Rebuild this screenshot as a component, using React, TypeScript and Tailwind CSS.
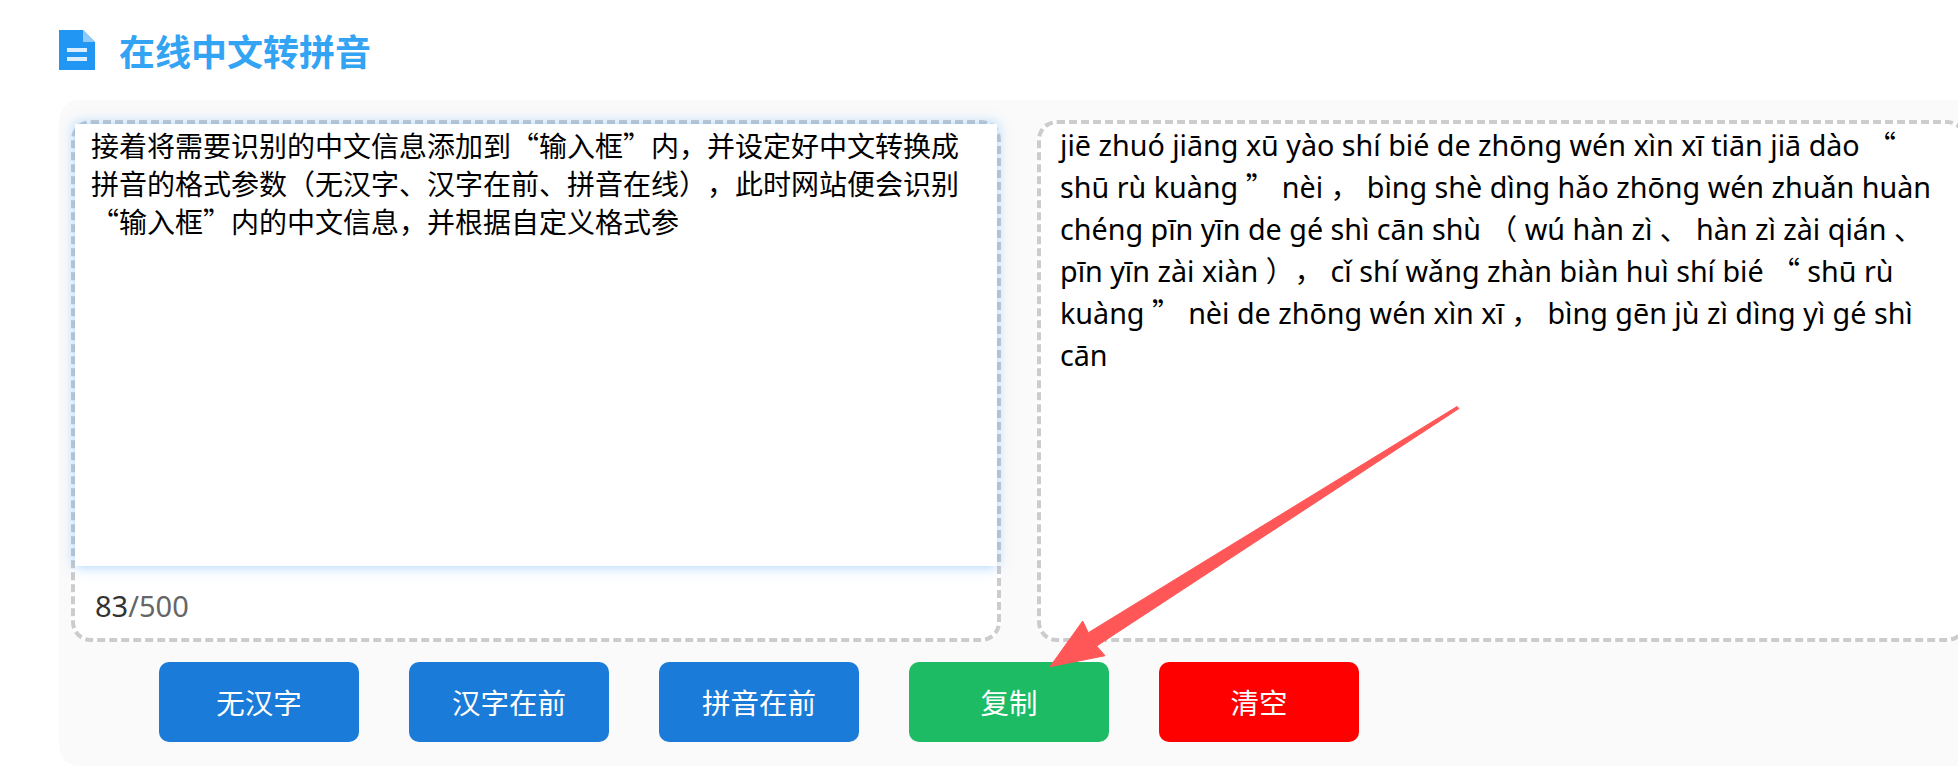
const buttons = [
  { label: "无汉字", color: "bg-[#1a7bd9]" },
  { label: "汉字在前", color: "bg-[#1a7bd9]" },
  { label: "拼音在前", color: "bg-[#1a7bd9]" },
  { label: "复制", color: "bg-[#1dbb63]" },
  { label: "清空", color: "bg-[#ff0000]" },
];

const inputText =
  "接着将需要识别的中文信息添加到“输入框”内，并设定好中文转换成拼音的格式参数（无汉字、汉字在前、拼音在线），此时网站便会识别“输入框”内的中文信息，并根据自定义格式参";

// 结果区每一行单独写，换行位置和截图保持一致
const pinyinLines = [
  "jiē zhuó jiāng xū yào shí bié de zhōng wén xìn xī tiān jiā dào “",
  "shū rù kuàng ” nèi ， bìng shè dìng hǎo zhōng wén zhuǎn huàn",
  "chéng pīn yīn de gé shì cān shù （ wú hàn zì 、 hàn zì zài qián 、",
  "pīn yīn zài xiàn ）， cǐ shí wǎng zhàn biàn huì shí bié “ shū rù",
  "kuàng ” nèi de zhōng wén xìn xī ， bìng gēn jù zì dìng yì gé shì",
  "cān",
];

// 引号要用中文字体才是全角
function PinyinLine({ text }: { text: string }) {
  const parts = text.split(/([“”])/);
  return (
    <div className="h-[42px] whitespace-pre">
      {parts.map((part, i) =>
        part === "“" || part === "”" ? (
          <span key={i} className="font-['Noto_Sans_CJK_SC',sans-serif] leading-none">
            {part}
          </span>
        ) : (
          part
        )
      )}
    </div>
  );
}

function DocIcon() {
  return (
    <svg width="36" height="40" viewBox="0 0 36 40" className="shrink-0">
      <path d="M0 0H24L36 12V40H0Z" fill="#2196f3" />
      <path d="M24 0L36 12H24Z" fill="#90caf9" />
      <rect x="8" y="18" width="20" height="4" fill="#dbeeff" />
      <rect x="8" y="27" width="20" height="4" fill="#dbeeff" />
    </svg>
  );
}

export default function App() {
  return (
    <div lang="zh-CN" className="relative h-[778px] w-full overflow-hidden bg-white font-['Noto_Sans_CJK_SC',sans-serif] [text-spacing-trim:space-all]">
      <div className="ml-[59px] flex h-[100px] items-start pt-[30px]">
        <DocIcon />
        <h1 className="ml-[24px] text-[36px] leading-[40px] font-bold text-[#33a3f4]">在线中文转拼音</h1>
      </div>

      <div className="ml-[59px] h-[666px] w-[1921px] rounded-[20px] bg-[#fafafa] pt-[20px] pl-[12px]">
        <div className="flex gap-[36px]">
          <div className="h-[522px] w-[930px] rounded-[20px] border-4 border-dashed border-[#cccccc] bg-white">
            <div className="h-[442px] w-full bg-white pt-[2px] pr-[17px] pl-[16px] text-[28px] leading-[38px] text-black shadow-[0_0_12px_rgba(64,158,255,0.5)]">
              {inputText}
            </div>
            <div className="pt-[20px] pl-[20px] font-['Noto_Sans',sans-serif] text-[29px] leading-[40px] text-[#666666]">
              <span className="text-[#333333]">83</span>/500
            </div>
          </div>
          <div className="h-[522px] w-[930px] rounded-[20px] border-4 border-dashed border-[#cccccc] bg-white pl-[19px] font-['Noto_Sans','Noto_Sans_CJK_SC',sans-serif] text-[28.7px] leading-[42px] text-black">
            {pinyinLines.map((line) => (
              <PinyinLine key={line} text={line} />
            ))}
          </div>
        </div>

        <div className="mt-[20px] flex gap-[50px] pl-[88px]">
          {buttons.map((b) => (
            <button
              key={b.label}
              className={`flex h-[80px] w-[200px] items-center justify-center rounded-[10px] text-[28.5px] text-white ${b.color}`}
            >
              {b.label}
            </button>
          ))}
        </div>
      </div>

      <svg className="pointer-events-none absolute top-0 left-0" width="1958" height="778">
        <polygon
          points="1457,406.5 1459,408.5 1096.7,646 1105,655.7 1050,666.7 1082.7,621 1088.3,632.7"
          fill="#ff5757"
          stroke="#ff5757"
          strokeWidth="1"
          strokeLinejoin="round"
        />
      </svg>
    </div>
  );
}
